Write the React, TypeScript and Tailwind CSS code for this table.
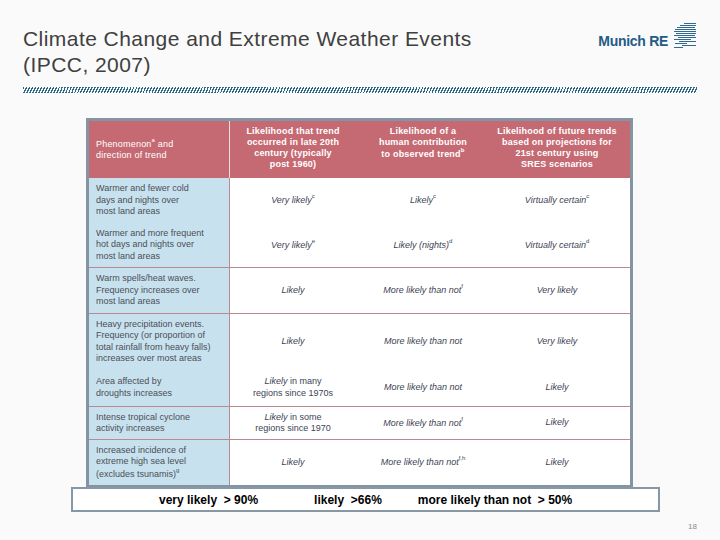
import React from "react";

const F = { fontFamily: '"Liberation Sans", Arial, sans-serif' };

type Row = {
  h: string;
  sep: boolean;
  left: React.ReactNode;
  c2: React.ReactNode;
  c3: React.ReactNode;
  c4: React.ReactNode;
};

const S = ({ children }: { children: React.ReactNode }) => (
  <sup className="text-[6px] not-italic relative top-[-1px] align-super leading-none">{children}</sup>
);

const rows: Row[] = [
  {
    h: "h-[45px]",
    sep: false,
    left: (<>Warmer and fewer cold<br />days and nights over<br />most land areas</>),
    c2: (<i>Very likely<S>c</S></i>),
    c3: (<i>Likely<S>c</S></i>),
    c4: (<i>Virtually certain<S>c</S></i>),
  },
  {
    h: "h-[44px]",
    sep: true,
    left: (<>Warmer and more frequent<br />hot days and nights over<br />most land areas</>),
    c2: (<i>Very likely<S>e</S></i>),
    c3: (<i>Likely (nights)<S>d</S></i>),
    c4: (<i>Virtually certain<S>d</S></i>),
  },
  {
    h: "h-[45px]",
    sep: true,
    left: (<>Warm spells/heat waves.<br />Frequency increases over<br />most land areas</>),
    c2: (<i>Likely</i>),
    c3: (<i>More likely than not<S>f</S></i>),
    c4: (<i>Very likely</i>),
  },
  {
    h: "h-[55px]",
    sep: false,
    left: (<>Heavy precipitation events.<br />Frequency (or proportion of<br />total rainfall from heavy falls)<br />increases over most areas</>),
    c2: (<i>Likely</i>),
    c3: (<i>More likely than not</i>),
    c4: (<i>Very likely</i>),
  },
  {
    h: "h-[37px]",
    sep: true,
    left: (<>Area affected by<br />droughts increases</>),
    c2: (<><i>Likely</i> in many<br />regions since 1970s</>),
    c3: (<i>More likely than not</i>),
    c4: (<i>Likely</i>),
  },
  {
    h: "h-[32px]",
    sep: true,
    left: (<>Intense tropical cyclone<br />activity increases</>),
    c2: (<><i>Likely</i> in some<br />regions since 1970</>),
    c3: (<i>More likely than not<S>f</S></i>),
    c4: (<i>Likely</i>),
  },
  {
    h: "h-[45px]",
    sep: false,
    left: (<>Increased incidence of<br />extreme high sea level<br />(excludes tsunamis)<S>g</S></>),
    c2: (<i>Likely</i>),
    c3: (<i>More likely than not<S>f,h</S></i>),
    c4: (<i>Likely</i>),
  },
];

function Logo() {
  const lines: [number, number, number][] = [
    [1, 10, 22],
    [3, 6, 22],
    [5, 3, 21],
    [7, 1, 22],
    [9, 0, 22],
    [11, 2, 22],
    [13, 0, 21],
    [15, 4, 22],
    [17, 0, 17],
    [19, 5, 22],
    [21, 1, 13],
    [23, 8, 22],
    [25, 0, 9],
  ];
  return (
    <svg width="23" height="27" viewBox="0 0 23 27" className="block" shapeRendering="crispEdges">
      {lines.map(([y, a, b], i) => (
        <rect key={i} x={a} y={y} width={b - a} height={1} fill="#2f6a93" />
      ))}
    </svg>
  );
}

export default function App() {
  return (
    <div className="relative w-[720px] h-[540px] bg-[#fafafa] flex flex-col overflow-hidden" style={F}>
      <div className="flex items-start justify-between pl-[23px] pr-[23px] pt-[26px]">
        <div className="text-[21px] leading-[26px] text-[#404040] tracking-[0.45px]">
          Climate Change and Extreme Weather Events
          <br />
          (IPCC, 2007)
        </div>
        <div className="flex items-end gap-[6px] mt-[-4px]">
          <span className="text-[14px] font-bold text-[#245b86] leading-none mb-[1px] tracking-[-0.3px]">Munich RE</span>
          <Logo />
        </div>
      </div>

      <div className="ml-[23px] mr-[23px] mt-[9px] h-[6px] bg-[repeating-linear-gradient(115deg,#2f6787_0_1.3px,transparent_1.3px_2.7px)]" />

      <div className="ml-[86px] mt-[25px] w-[547px] border-[3px] border-[#8494a2] bg-white">
        <div className="grid grid-cols-[141px_126px_134px_140px] h-[57px] bg-[#c56a73] text-white text-[9px] leading-[11px] tracking-[0.2px]">
          <div className="flex items-center pl-[7px] border-r border-[#f1dfe1]">
            <div>Phenomenon<S>a</S> and<br />direction of trend</div>
          </div>
          <div className="text-center font-bold pt-[5px]">Likelihood that trend<br />occurred in late 20th<br />century (typically<br />post 1960)</div>
          <div className="text-center font-bold pt-[5px]">Likelihood of a<br />human contribution<br />to observed trend<S>b</S></div>
          <div className="text-center font-bold pt-[5px] pr-[6px]">Likelihood of future trends<br />based on projections for<br />21st century using<br />SRES scenarios</div>
        </div>
        {rows.map((r, i) => (
          <div
            key={i}
            className={`grid grid-cols-[141px_126px_134px_140px] ${r.h} ${r.sep ? "border-b border-[#b98a90]" : ""} text-[9px] leading-[11.5px]`}
            style={{ boxSizing: "content-box" }}
          >
            <div className="flex items-center pl-[7px] bg-[#c8e1ef] text-[#4b4f55] border-r border-[#b98a90]">
              <div>{r.left}</div>
            </div>
            <div className="flex items-center justify-center text-center text-[#3d4356]">
              <div>{r.c2}</div>
            </div>
            <div className="flex items-center justify-center text-center text-[#3d4356]">
              <div>{r.c3}</div>
            </div>
            <div className="flex items-center justify-center text-center text-[#3d4356] pr-[6px]">
              <div>{r.c4}</div>
            </div>
          </div>
        ))}
      </div>

      <div className="ml-[71px] mt-[-1px] w-[589px] h-[25px] border-2 border-[#8797a3] bg-white flex items-center text-[12px] font-bold text-black whitespace-pre leading-none">
        <span className="ml-[86px]">very likely  &gt; 90%</span>
        <span className="ml-[56px]">likely  &gt;66%</span>
        <span className="ml-[36px]">more likely than not  &gt; 50%</span>
      </div>

      <div className="flex justify-end pr-[23px] mt-[9px] text-[8px] text-[#8a8a8a]">18</div>
    </div>
  );
}
